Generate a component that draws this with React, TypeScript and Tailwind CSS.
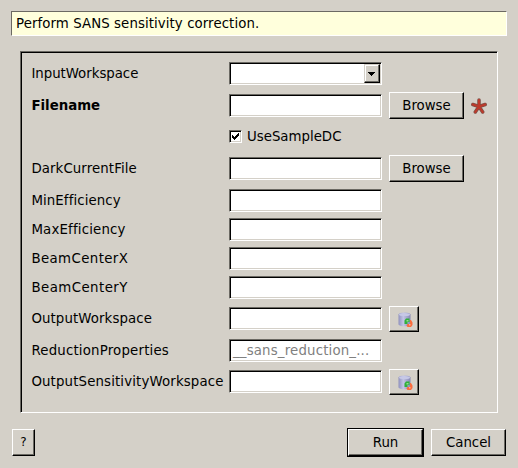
import React from "react";

const raised =
  "relative flex shrink-0 items-center justify-center bg-[#d4d0c8] border border-t-white border-l-white border-b-black border-r-black shadow-[inset_-1px_-1px_0_#6b6963]";
const sunken =
  "shrink-0 border border-t-[#6b6963] border-l-[#6b6963] border-b-white border-r-white bg-white shadow-[inset_1px_1px_0_#000,inset_-1px_-1px_0_#d4d0c8]";

function Field({ children, className = "" }: { children?: React.ReactNode; className?: string }) {
  return <div className={`${sunken} h-[23px] w-[153px] ${className}`}>{children}</div>;
}

function Row({
  label,
  text = "",
  className,
  children,
}: {
  label: string;
  text?: string;
  className: string;
  children?: React.ReactNode;
}) {
  return (
    <div className={`flex ${className}`}>
      <div className={`w-[198px] shrink-0 self-center whitespace-nowrap pl-[0.4px] leading-[16px] ${text}`}>{label}</div>
      {children}
    </div>
  );
}

function Browse() {
  return <button className={`${raised} ml-[7px] h-[27px] w-[75px] pt-px`}>Browse</button>;
}

function ReplaceButton() {
  return (
    <button className={`${raised} ml-[7px] h-[26px] w-[30px]`}>
      <svg width="16" height="16" viewBox="0 0 16 16" className="ml-px mt-px">
        <defs>
          <linearGradient id="cyl" x1="0" x2="1" y1="0" y2="0">
            <stop offset="0" stopColor="#8f91bd" />
            <stop offset="0.4" stopColor="#c3c5e6" />
            <stop offset="1" stopColor="#8587b3" />
          </linearGradient>
        </defs>
        <path d="M1.500 2.500Q2 .500 7.500 .500T13.500 2.500V12.500Q12.500 14.300 7.500 14.300T1.500 12.500Z" fill="url(#cyl)" />
        <ellipse cx="7.500" cy="2.500" rx="5.500" ry="1.500" fill="#c6c8e6" />
        <path d="M10.500 12H13V8H14L15.500 10.500V13L14 15H10.500L9.500 13.500Z" fill="#fa6b3c" />
        <path d="M7.500 12V8.500L9 6.500H12.500V10H10.500V12Z" fill="#2fb03a" />
        <path d="M9.500 8h2v1.500h-2z" fill="#93dc8c" />
        <path d="M12 12h1.500v1.500h-1.500z" fill="#ffae8c" />
      </svg>
    </button>
  );
}

export default function App() {
  return (
    <div className="h-[468px] w-[518px] overflow-hidden bg-[#d4d0c8] pt-[11px] font-['DejaVu_Sans',sans-serif] text-[13.333px] text-black">
      <div className="ml-[11px] flex h-[25px] w-[496px] items-center border border-t-[#6b6963] border-l-[#6b6963] border-b-white border-r-white bg-[#ffffdc] pl-[4px] tracking-[0.08px]">
        Perform SANS sensitivity correction.
      </div>

      <div className="ml-[20px] mt-[15px] h-[362px] w-[478px] border border-t-[#6b6963] border-l-[#6b6963] border-b-white border-r-white pl-[10px] pt-[10px] shadow-[inset_1px_1px_0_#000,inset_-1px_-1px_0_#d4d0c8]">
        <Row label="InputWorkspace" text="tracking-[-0.03px]" className="h-[23px]">
          <Field className="flex justify-end p-px">
            <div className="flex h-[19px] w-[16px] items-center justify-center border border-t-[#d4d0c8] border-l-[#d4d0c8] border-b-black border-r-black bg-[#d4d0c8] pr-px shadow-[inset_-1px_-1px_0_#6b6963,inset_1px_1px_0_#fff]">
              <svg width="7" height="4" viewBox="0 0 7 4" shapeRendering="crispEdges">
                <path d="M0 0h7v1h-1v1h-1v1h-1v1h-1v-1h-1v-1h-1v-1h-1z" />
              </svg>
            </div>
          </Field>
        </Row>
        <Row label="Filename" text="font-bold" className="mt-[7px] h-[27px] items-center">
          <Field />
          <Browse />
          <svg width="16" height="16" viewBox="0 0 16 16" className="ml-[7px]">
            <path
              d="M8 8.500V2M8 8.500L1.800 6.500M8 8.500L14.200 6.500M8 8.500L4.300 14M8 8.500L11.700 14"
              stroke="#7d5148"
              strokeWidth="3.500"
              strokeLinecap="round"
            />
            <path
              d="M8 8.500V2M8 8.500L1.800 6.500M8 8.500L14.200 6.500M8 8.500L4.300 14M8 8.500L11.700 14"
              stroke="#bd3a2c"
              strokeWidth="2.200"
              strokeLinecap="round"
            />
          </svg>
        </Row>
        <div className="ml-[198px] mt-[7px] flex h-[21px] items-center">
          <div className={`${sunken} h-[13px] w-[13px] p-[2px]`}>
            <svg width="7" height="7" viewBox="0 0 7 7" shapeRendering="crispEdges">
              <path d="M0 2h1v1h1v1h1v-1h1v-1h1v-1h1v-1h1v3h-1v1h-1v1h-1v1h-1v1h-1v-1h-1v-1h-1z" />
            </svg>
          </div>
          <span className="ml-[5px] leading-[16px]">UseSampleDC</span>
        </div>
        <Row label="DarkCurrentFile" text="tracking-[0.1px]" className="mt-[8px] h-[27px] items-center">
          <Field />
          <Browse />
        </Row>
        <Row label="MinEfficiency" text="tracking-[0.1px] [font-variant-ligatures:common-ligatures]" className="mt-[7px] h-[23px]"><Field /></Row>
        <Row label="MaxEfficiency" text="tracking-[0.18px] [font-variant-ligatures:common-ligatures]" className="mt-[6px] h-[23px]"><Field /></Row>
        <Row label="BeamCenterX" text="tracking-[0.4px]" className="mt-[6px] h-[23px]"><Field /></Row>
        <Row label="BeamCenterY" text="tracking-[0.45px]" className="mt-[6px] h-[23px]"><Field /></Row>
        <Row label="OutputWorkspace" text="tracking-[0.1px]" className="mt-[7px] h-[26px]">
          <Field className="mt-px" />
          <ReplaceButton />
        </Row>
        <Row label="ReductionProperties" text="tracking-[0.19px]" className="mt-[7px] h-[23px]">
          <Field className="flex items-center pl-[3px] tracking-[0.17px] text-[#808080]">__sans_reduction_...</Field>
        </Row>
        <Row label="OutputSensitivityWorkspace" text="tracking-[0.14px]" className="mt-[7px] h-[26px]">
          <Field className="mt-px" />
          <ReplaceButton />
        </Row>
      </div>

      <div className="mt-[15px] flex items-center pl-[12px]">
        <button className={`${raised} h-[27px] w-[23px] pb-px text-[12px]`}>?</button>
        <div className="ml-[312px] bg-black p-px">
          <button className={`${raised} h-[27px] w-[75px]`}>Run</button>
        </div>
        <button className={`${raised} ml-[7px] h-[27px] w-[75px]`}>Cancel</button>
      </div>
    </div>
  );
}
